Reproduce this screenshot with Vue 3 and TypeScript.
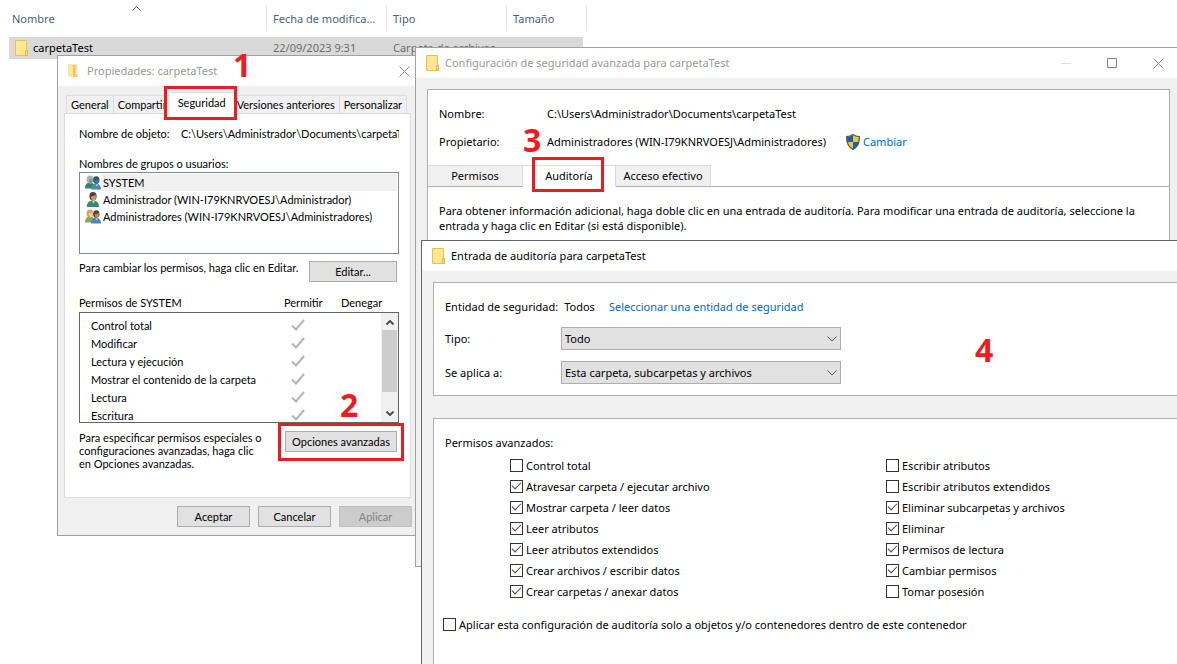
<script setup lang="ts">
import { ref } from 'vue'

interface Permission {
  id: string
  label: string
  checked: boolean
}

interface Principal {
  kind: 'system' | 'user' | 'group'
  name: string
}

const principals: Principal[] = [
  { kind: 'system', name: 'SYSTEM' },
  { kind: 'user', name: 'Administrador (WIN-I79KNRVOESJ\\Administrador)' },
  { kind: 'group', name: 'Administradores (WIN-I79KNRVOESJ\\Administradores)' },
]

const systemPermissions: string[] = [
  'Control total',
  'Modificar',
  'Lectura y ejecución',
  'Mostrar el contenido de la carpeta',
  'Lectura',
  'Escritura',
]

const permissionColumns = ref<Permission[][]>([
  [
    { id: 'full', label: 'Control total', checked: false },
    { id: 'traverse', label: 'Atravesar carpeta / ejecutar archivo', checked: true },
    { id: 'list', label: 'Mostrar carpeta / leer datos', checked: true },
    { id: 'read-attr', label: 'Leer atributos', checked: true },
    { id: 'read-ext', label: 'Leer atributos extendidos', checked: true },
    { id: 'create-files', label: 'Crear archivos / escribir datos', checked: true },
    { id: 'create-folders', label: 'Crear carpetas / anexar datos', checked: true },
  ],
  [
    { id: 'write-attr', label: 'Escribir atributos', checked: false },
    { id: 'write-ext', label: 'Escribir atributos extendidos', checked: false },
    { id: 'delete-sub', label: 'Eliminar subcarpetas y archivos', checked: true },
    { id: 'delete', label: 'Eliminar', checked: true },
    { id: 'read-perm', label: 'Permisos de lectura', checked: true },
    { id: 'change-perm', label: 'Cambiar permisos', checked: true },
    { id: 'take-owner', label: 'Tomar posesión', checked: false },
  ],
])

const entryType = ref('Todo')
const appliesTo = ref('Esta carpeta, subcarpetas y archivos')
const onlyContained = ref(false)
</script>

<template>
  <div class="desktop">
    <svg class="sprite" aria-hidden="true">
      <symbol id="folder" viewBox="0 0 13 16">
        <path d="M.5 .5H11.5V9.5L12.5 10V15.5H.5Z" fill="#ffe794" stroke="#e8c24a" />
        <path d="M10.5 15V10.5H12.5V15.5H10.5Z" fill="#ffe08a" stroke="#e3b83c" />
      </symbol>
      <symbol id="folder-open" viewBox="0 0 10 14">
        <path d="M1 .5H8.500V12H1Z" fill="#f3cd74" />
        <path d="M0 0L5 2V14L0 12Z" fill="#ffe7a0" />
        <path d="M5.500 2V13" stroke="#eec262" />
        <path d="M7 10H9.500V13H5.5Z" fill="#f3cd74" />
      </symbol>
      <symbol id="close" viewBox="0 0 11 11">
        <path d="M.5 .5L10.5 10.5M10.5 .5L.5 10.5" fill="none" stroke="#8a8a8a" />
      </symbol>
      <symbol id="head-pair" viewBox="0 0 16 16">
        <path d="M0 13.500C0 10 1.500 7.500 5 7.500S10 10 10 13.500Z" fill="var(--left-body)" />
        <ellipse cx="5" cy="4.500" rx="3.400" ry="4" fill="var(--left-hair)" />
        <path d="M3.800 4Q5.500 4 7.600 3.500Q8 7.500 6 8.500Q4 7.500 3.800 4Z" fill="var(--left-face)" />
        <path d="M6 14.500C6 11 8 8.500 11 8.500S16 11 16 14.500Z" fill="#4a86bd" />
        <ellipse cx="11.300" cy="5" rx="3.200" ry="3.800" fill="var(--right-hair)" />
        <path d="M9.500 5Q12 5 13.500 4Q14.500 8 12 9.500Q10 8.500 9.500 5Z" fill="var(--right-face)" />
        <path d="M10.500 9.500L12 11.500L13 9.300Z" fill="#c5dcee" />
      </symbol>
      <symbol id="head-one" viewBox="0 0 16 16">
        <path d="M2 15C1.500 11 4 8.500 8 8.500S14 11 14 15Z" fill="#37896b" />
        <ellipse cx="8" cy="4.300" rx="3.600" ry="4.200" fill="#54402f" />
        <path d="M6 4.500Q8.500 4.500 10.500 2.800L11 5.500Q10.500 8.500 8.500 9.400Q6 8.500 6 4.500Z" fill="#c69a78" />
        <path d="M7 9.300L8.700 11.500L10 9.300Z" fill="#d5e6df" />
      </symbol>
      <symbol id="tick" viewBox="0 0 14 12">
        <path d="M1 6.500L5 10.500L13 1" fill="none" stroke="#b4b4b4" stroke-width="2" />
      </symbol>
      <symbol id="shield" viewBox="0 0 14 16">
        <path d="M7 .6C5 2 3 2.600 .7 2.600C.5 9 2 13 7 15.400C12 13 13.500 9 13.300 2.600C11 2.600 9 2 7 .6Z" fill="#fbc02d" />
        <path d="M7 1C5 2.300 3 3 1 3V8H7ZM7 8H13C12.500 11.500 10.500 13.800 7 15Z" fill="#0d63c4" />
        <path d="M7 .6C5 2 3 2.600 .7 2.600C.5 9 2 13 7 15.400C12 13 13.500 9 13.300 2.600C11 2.600 9 2 7 .6Z" fill="none" stroke="#555" stroke-width="1.200" />
      </symbol>
    </svg>

    <table class="files">
      <thead>
        <tr>
          <th class="col-name"><div>Nombre</div></th>
          <th class="col-mid"><div>Fecha de modifica...</div></th>
          <th class="col-mid"><div>Tipo</div></th>
          <th class="col-size"><div>Tamaño</div></th>
        </tr>
      </thead>
      <tbody>
        <tr>
          <td class="file-name"><svg class="folder"><use href="#folder" /></svg>carpetaTest</td>
          <td>22/09/2023 9:31</td>
          <td>Carpeta de archivos</td>
          <td class="file-size"></td>
        </tr>
      </tbody>
    </table>
    <svg class="sort" viewBox="0 0 9 5"><path d="M.5 4.500L4.500 .5L8.500 4.500" fill="none" stroke="#666" /></svg>

    <section class="window props">
      <header class="titlebar small">
        <svg class="folder-open"><use href="#folder-open" /></svg>
        <h1>Propiedades: carpetaTest</h1>
        <button class="caption" aria-label="Cerrar"><svg class="glyph"><use href="#close" /></svg></button>
      </header>
      <nav class="sheet-tabs">
        <button>General</button>
        <button>Compartir</button>
        <button class="active">Seguridad</button>
        <button>Versiones anteriores</button>
        <button>Personalizar</button>
      </nav>
      <div class="sheet">
        <div class="object">
          <span>Nombre de objeto:</span>
          <span class="path">C:\Users\Administrador\Documents\carpetaTest</span>
        </div>
        <p class="groups-label">Nombres de grupos o usuarios:</p>
        <ul class="groups">
          <li v-for="p in principals" :key="p.name" :class="p.kind">
            <svg class="head"><use :href="p.kind === 'user' ? '#head-one' : '#head-pair'" /></svg>
            <span>{{ p.name }}</span>
          </li>
        </ul>
        <div class="edit-row">
          <p>Para cambiar los permisos, haga clic en Editar.</p>
          <button class="push edit">Editar...</button>
        </div>
        <div class="perm-head">
          <span>Permisos de SYSTEM</span><span>Permitir</span><span>Denegar</span>
        </div>
        <div class="perm-box">
          <ul>
            <li v-for="name in systemPermissions" :key="name">
              <span>{{ name }}</span>
              <svg class="tick"><use href="#tick" /></svg>
            </li>
          </ul>
          <div class="scroll">
            <svg viewBox="0 0 8 5"><path d="M.5 4.500L4 1L7.500 4.500" fill="none" stroke="#505050" stroke-width="2" /></svg>
            <div class="thumb"></div>
            <svg viewBox="0 0 8 5"><path d="M.5 .5L4 4L7.500 .5" fill="none" stroke="#505050" stroke-width="2" /></svg>
          </div>
        </div>
        <div class="special">
          <p>Para especificar permisos especiales o configuraciones avanzadas, haga clic en Opciones avanzadas.</p>
          <button class="push">Opciones avanzadas</button>
        </div>
      </div>
      <footer class="actions">
        <button class="push">Aceptar</button>
        <button class="push">Cancelar</button>
        <button class="push" disabled>Aplicar</button>
      </footer>
    </section>

    <section class="window advanced">
      <header class="titlebar">
        <svg class="folder"><use href="#folder" /></svg>
        <h1>Configuración de seguridad avanzada para carpetaTest</h1>
        <button class="caption" aria-label="Minimizar"><svg class="glyph" viewBox="0 0 11 11"><path d="M0 5.500H10" stroke="#ddd" /></svg></button>
        <button class="caption" aria-label="Maximizar"><svg class="glyph" viewBox="0 0 11 11"><path d="M.5 .5H9.500V9.500H.5Z" fill="none" stroke="#808080" /></svg></button>
        <button class="caption" aria-label="Cerrar"><svg class="glyph"><use href="#close" /></svg></button>
      </header>
      <div class="pane">
        <dl class="facts">
          <dt>Nombre:</dt>
          <dd>C:\Users\Administrador\Documents\carpetaTest</dd>
          <dt>Propietario:</dt>
          <dd>
            Administradores (WIN-I79KNRVOESJ\Administradores)
            <svg class="shield"><use href="#shield" /></svg>
            <a href="#">Cambiar</a>
          </dd>
        </dl>
        <nav class="pane-tabs">
          <button>Permisos</button>
          <button class="active">Auditoría</button>
          <button>Acceso efectivo</button>
        </nav>
        <p class="hint">
          Para obtener información adicional, haga doble clic en una entrada de auditoría. Para modificar una entrada de auditoría, seleccione la entrada y haga clic en Editar (si está disponible).
        </p>
      </div>
    </section>

    <section class="window entry">
      <header class="titlebar">
        <svg class="folder"><use href="#folder" /></svg>
        <h1>Entrada de auditoría para carpetaTest</h1>
      </header>
      <div class="card">
        <div class="line">
          <span>Entidad de seguridad:</span><span class="who">Todos</span>
          <a href="#">Seleccionar una entidad de seguridad</a>
        </div>
        <div class="field">
          <label for="type">Tipo:</label>
          <div class="combo">
            <select id="type" v-model="entryType"><option>Todo</option></select>
            <svg viewBox="0 0 10 6"><path d="M.5 .5L5 5L9.500 .5" fill="none" stroke="#555" /></svg>
          </div>
        </div>
        <div class="field">
          <label for="applies">Se aplica a:</label>
          <div class="combo">
            <select id="applies" v-model="appliesTo"><option>Esta carpeta, subcarpetas y archivos</option></select>
            <svg viewBox="0 0 10 6"><path d="M.5 .5L5 5L9.500 .5" fill="none" stroke="#555" /></svg>
          </div>
        </div>
      </div>
      <div class="card rights">
        <p>Permisos avanzados:</p>
        <div class="columns">
          <div v-for="(column, i) in permissionColumns" :key="i" class="column">
            <label v-for="perm in column" :key="perm.id" class="check">
              <input v-model="perm.checked" type="checkbox" />
              <span>{{ perm.label }}</span>
            </label>
          </div>
        </div>
        <label class="check only">
          <input v-model="onlyContained" type="checkbox" />
          <span>Aplicar esta configuración de auditoría solo a objetos y/o contenedores dentro de este contenedor</span>
        </label>
      </div>
    </section>

    <div class="mark mark-security"></div>
    <div class="mark mark-options"></div>
    <div class="mark mark-audit"></div>
    <span class="step step-1">1</span>
    <span class="step step-2">2</span>
    <span class="step step-3">3</span>
    <span class="step step-4">4</span>
  </div>
</template>

<style>
body {
  margin: 0;
  background: #fff;
}
</style>

<style scoped>
.desktop {
  position: relative;
  min-height: 100vh;
  overflow: hidden;
  background: #fff;
  color: #000;
  font: 11px/16px "Segoe UI", "Noto Sans", sans-serif;
}
.desktop *,
.desktop *::before,
.desktop *::after {
  box-sizing: border-box;
}
.sprite {
  position: absolute;
  width: 0;
  height: 0;
}
svg {
  display: block;
  flex: none;
}
p,
h1,
ul,
dl,
dd {
  margin: 0;
  padding: 0;
  list-style: none;
}
h1 {
  font-size: 11px;
  font-weight: 400;
}
button,
select,
input {
  margin: 0;
  font: inherit;
  color: inherit;
  border-radius: 0;
}
button {
  padding: 0;
  border: 0;
  background: none;
  white-space: nowrap;
}
a {
  color: #0066cc;
  text-decoration: none;
}
.folder {
  width: 13px;
  height: 16px;
}

/* Explorer file list */
.files {
  margin: 6px 0 0 9px;
  border-collapse: collapse;
  table-layout: fixed;
  width: 578px;
}
.col-name {
  width: 258px;
}
.col-mid {
  width: 120px;
}
.files th {
  padding: 0 0 6px;
  font-weight: 400;
  text-align: left;
  color: #4c607a;
}
.files th div {
  height: 25px;
  padding-left: 6px;
  border-right: 1px solid #e5e5e5;
  line-height: 26px;
  white-space: nowrap;
}
.files .col-name div {
  padding-left: 3px;
}
.files td {
  height: 22px;
  padding: 0 0 0 6px;
  background: #d9d9d9;
  color: #6d6d6d;
  white-space: nowrap;
}
.files .file-name {
  display: flex;
  align-items: center;
  gap: 5px;
  color: #000;
}
.files .file-size {
  background: linear-gradient(#d9d9d9, #d9d9d9) 0 0 / 76px 100% no-repeat;
}
.sort {
  position: absolute;
  left: 132px;
  top: 6px;
  width: 9px;
  height: 5px;
}

/* Window frames */
.window {
  position: absolute;
  background: #f0f0f0;
  border: 1px solid #a0a0a0;
}
.titlebar {
  display: flex;
  align-items: center;
  height: 30px;
  padding-left: 10px;
  background: #fff;
}
.titlebar h1 {
  flex: 1;
  margin-left: 6px;
  color: #999;
}
.caption {
  display: grid;
  place-items: center;
  width: 46px;
  height: 30px;
}
.glyph {
  width: 11px;
  height: 11px;
}

/* Folder properties */
.props {
  left: 57px;
  top: 55px;
  width: 360px;
  padding-bottom: 8px;
  font: 11px/13px "Microsoft Sans Serif", Lato, sans-serif;
}
.titlebar.small h1 {
  margin-left: 9px;
  font: 11px/16px "Segoe UI", "Noto Sans", sans-serif;
}
.small .caption {
  width: 24px;
}
.folder-open {
  width: 10px;
  height: 14px;
}
.sheet-tabs {
  display: flex;
  align-items: flex-end;
  height: 27px;
  padding-left: 8px;
}
.sheet-tabs button {
  height: 18px;
  padding: 0 4px;
  border: 1px solid #dcdcdc;
  border-bottom: 0;
  border-left-width: 0;
}
.sheet-tabs button:first-child {
  border-left-width: 1px;
}
.sheet-tabs .active {
  position: relative;
  height: 22px;
  margin: 0 -2px -1px;
  padding: 0 8px 2px;
  background: #fff;
}
.sheet {
  margin: 0 5px 0 6px;
  padding: 13px 11px 0 14px;
  height: 385px;
  border: 1px solid #dcdcdc;
  background: #fff;
}
.object {
  display: flex;
  white-space: nowrap;
}
.object span:first-child {
  width: 102px;
  flex: none;
}
.path {
  overflow: hidden;
}
.groups-label {
  margin-top: 17px;
}
.groups {
  height: 82px;
  margin-top: 2px;
  padding: 1px;
  border: 1px solid #828790;
}
.groups li {
  display: flex;
  align-items: center;
  height: 17px;
  padding-left: 4px;
  --left-hair: #d6a85a;
  --left-face: #f0cfa4;
  --left-body: #86a950;
  --right-hair: #55402f;
  --right-face: #b98560;
}
.groups .system {
  --left-hair: #a9b5ad;
  --left-face: #7d9d8d;
  --left-body: #3b8263;
  --right-hair: #32536b;
  --right-face: #4c7290;
}
.groups span {
  flex: 1;
  padding-left: 2px;
  line-height: 17px;
}
.groups .system span {
  background: #f0f0f0;
}
.head {
  width: 16px;
  height: 16px;
}
.edit-row {
  display: flex;
  justify-content: space-between;
  margin-top: 7px;
  padding-right: 2px;
}
.push {
  height: 21px;
  border: 1px solid #adadad;
  background: #e1e1e1;
}
.push:disabled {
  border-color: #bfbfbf;
  background: #ccc;
  color: #838383;
}
.push.edit {
  width: 88px;
}
.perm-head {
  display: grid;
  grid-template-columns: 205px 57px 1fr;
  margin-top: 14px;
}
.perm-box {
  display: flex;
  height: 111px;
  margin-top: 3px;
  border: 1px solid #646464;
  overflow: hidden;
}
.perm-box ul {
  flex: 1;
  padding: 3px 0 0 11px;
}
.perm-box li {
  display: flex;
  align-items: center;
  justify-content: space-between;
  height: 18px;
  padding-right: 76px;
}
.tick {
  width: 14px;
  height: 12px;
}
.scroll {
  display: flex;
  flex-direction: column;
  align-items: center;
  width: 17px;
  padding: 7px 1px 6px;
  background: #f0f0f0;
}
.scroll svg {
  width: 8px;
  height: 5px;
}
.thumb {
  width: 15px;
  height: 62px;
  margin: 5px 0 auto;
  background: #cdcdcd;
}
.special {
  display: flex;
  justify-content: space-between;
  align-items: flex-start;
  margin-top: 8px;
  padding-right: 2px;
}
.special p {
  width: 185px;
}
.special .push {
  width: 112px;
}
.actions {
  display: flex;
  justify-content: flex-end;
  gap: 8px;
  padding: 8px 4px 0;
}
.actions .push {
  width: 73px;
}

/* Advanced security settings */
.advanced {
  left: 415px;
  right: -5px;
  top: 47px;
  height: 520px;
}
.pane {
  margin: 11px 11px 0;
  height: 480px;
  border: 1px solid #b0b0b0;
  background: #fff;
}
.facts {
  display: grid;
  grid-template-columns: 108px 1fr;
  gap: 12px 0;
  padding: 16px 11px 15px;
}
.facts dd {
  display: flex;
  align-items: center;
  white-space: nowrap;
}
.shield {
  width: 14px;
  height: 16px;
  margin: 0 3px 0 20px;
}
.pane-tabs {
  display: flex;
  height: 22px;
}
.pane-tabs::after {
  content: "";
  flex: 1;
  border-bottom: 1px solid #b0b0b0;
}
.pane-tabs button {
  width: 95px;
  border: 1px solid #d9d9d9;
  border-left: 0;
  border-bottom-color: #b0b0b0;
  background: #f0f0f0;
}
.pane-tabs .active {
  width: 93px;
  border-bottom-color: #fff;
  background: #fff;
}
.hint {
  padding: 16px 11px;
  line-height: 15px;
}

/* Auditing entry */
.entry {
  left: 421px;
  right: -20px;
  top: 240px;
  bottom: -20px;
  border-color: #666;
}
.entry h1 {
  color: #000;
}
.card {
  margin: 11px 11px 0;
  padding: 16px 11px 11px;
  border: 1px solid #b0b0b0;
  background: #fff;
}
.line {
  display: flex;
}
.who {
  margin: 0 14px 0 6px;
}
.field {
  display: flex;
  align-items: center;
  margin-top: 11px;
}
.line + .field {
  margin-top: 12px;
}
.field label {
  width: 116px;
}
.combo {
  position: relative;
  width: 280px;
}
.combo select {
  display: block;
  width: 100%;
  height: 23px;
  padding: 0 20px 0 3px;
  border: 1px solid #adadad;
  background: #e1e1e1;
  appearance: none;
}
.combo svg {
  position: absolute;
  right: 4px;
  top: 9px;
  width: 10px;
  height: 6px;
  pointer-events: none;
}
.rights {
  margin-top: 22px;
  height: 300px;
}
.columns {
  display: flex;
  margin: 4px 0 0 65px;
}
.column {
  flex: none;
  width: 376px;
}
.check {
  display: flex;
  align-items: center;
  gap: 3px;
  height: 21px;
  white-space: nowrap;
}
.check input {
  display: grid;
  width: 13px;
  height: 13px;
  border: 1px solid #333;
  background: #fff;
  appearance: none;
}
.check input:checked::after {
  content: "";
  width: 9px;
  height: 5px;
  margin: 1px;
  border: solid #444;
  border-width: 0 0 1px 1px;
  transform: rotate(-45deg);
}
.only {
  margin: 12px 0 0 -2px;
}

/* Tutorial annotations */
.mark {
  position: absolute;
  border: 3px solid #ed1c24;
  pointer-events: none;
}
.mark-security {
  left: 164px;
  top: 86px;
  width: 73px;
  height: 34px;
}
.mark-options {
  left: 278px;
  top: 423px;
  width: 126px;
  height: 38px;
}
.mark-audit {
  left: 532px;
  top: 157px;
  width: 72px;
  height: 35px;
}
.step {
  position: absolute;
  color: #ed1c24;
  font-size: 32px;
  font-weight: 700;
  line-height: 32px;
}
.step-1 {
  left: 233px;
  top: 49px;
}
.step-2 {
  left: 340px;
  top: 389px;
}
.step-3 {
  left: 523px;
  top: 124px;
}
.step-4 {
  left: 975px;
  top: 334px;
}
</style>
